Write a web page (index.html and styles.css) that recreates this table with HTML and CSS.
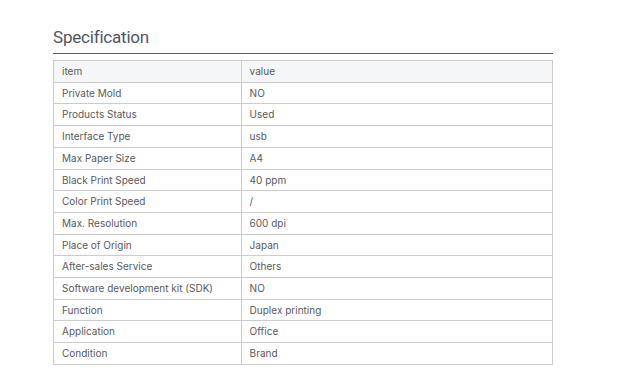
FILE: index.html
```html
<!DOCTYPE html>
<html>
<head>
  <meta charset="UTF-8">
  <title>Specification</title>
  <link rel="stylesheet" href="styles.css">
</head>
<body>
  <div class="spec">
    <h2 class="spec-title">Specification</h2>
    <table class="spec-table">
      <thead>
        <tr><th class="col-item">item</th><th>value</th></tr>
      </thead>
      <tbody>
        <tr><td>Private Mold</td><td>NO</td></tr>
        <tr><td>Products Status</td><td>Used</td></tr>
        <tr><td>Interface Type</td><td>usb</td></tr>
        <tr><td>Max Paper Size</td><td>A4</td></tr>
        <tr><td>Black Print Speed</td><td>40 ppm</td></tr>
        <tr><td>Color Print Speed</td><td>/</td></tr>
        <tr><td>Max. Resolution</td><td>600 dpi</td></tr>
        <tr><td>Place of Origin</td><td>Japan</td></tr>
        <tr><td>After-sales Service</td><td>Others</td></tr>
        <tr><td>Software development kit (SDK)</td><td>NO</td></tr>
        <tr><td>Function</td><td>Duplex printing</td></tr>
        <tr><td>Application</td><td>Office</td></tr>
        <tr><td>Condition</td><td>Brand</td></tr>
      </tbody>
    </table>
  </div>
</body>
</html>
```

FILE: styles.css
```css
body {
  margin: 0;
  padding: 26px 0 0 53px;
  background: #fff;
  font-family: Inter, "Noto Sans", sans-serif;
}

.spec {
  width: 500px;
}

.spec-title {
  margin: 0;
  padding-bottom: 5px;
  font-family: Roboto, sans-serif;
  font-size: 17px;
  letter-spacing: -0.2px;
  font-weight: 400;
  color: #4f5561;
  border-bottom: 1px solid #555c68;
  line-height: 22px;
}

.spec-table {
  width: 500px;
  margin-top: 6px;
  border-collapse: collapse;
  font-size: 10px;
  color: #5a5a5a;
}

.spec-table th,
.spec-table td {
  border: 1px solid #ccc;
  padding: 0 8px;
  line-height: 20.7px;
  text-align: left;
  font-weight: 400;
}

.spec-table th {
  background: #f5f6f8;
}

.col-item {
  width: 37.6%;
}
```
